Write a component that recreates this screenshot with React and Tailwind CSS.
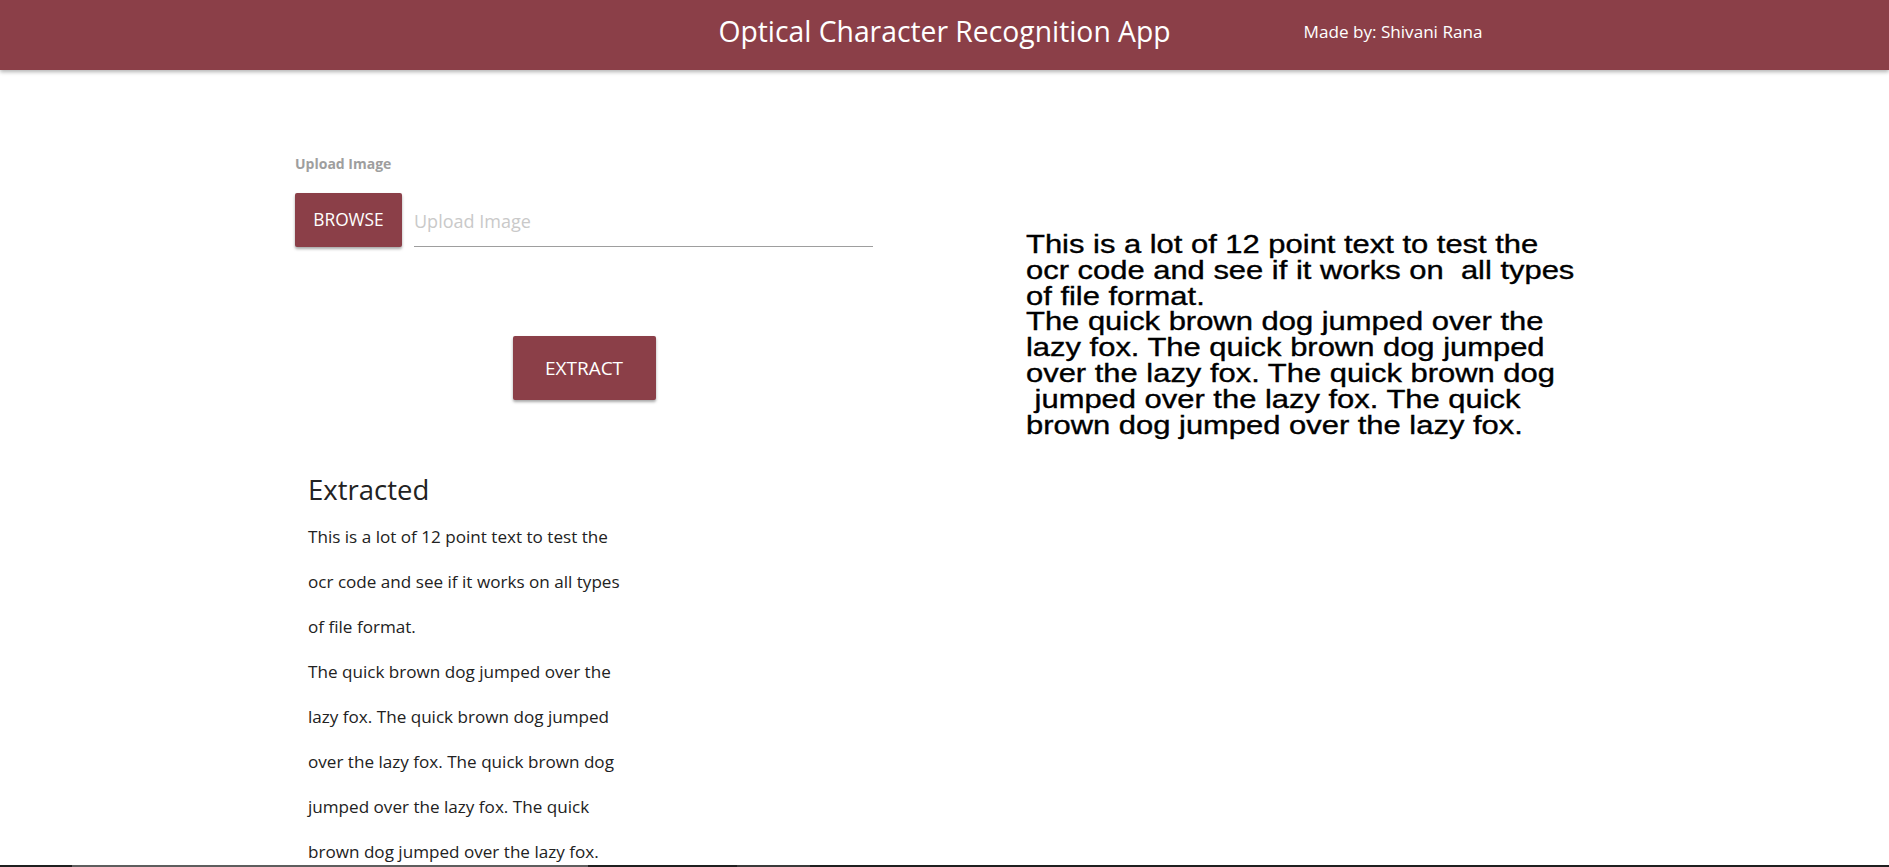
import React from 'react';

/* ─── content ─────────────────────────────────────────────── */
const extracted = [
  'This is a lot of 12 point text to test the',
  'ocr code and see if it works on all types',
  'of file format.',
  'The quick brown dog jumped over the',
  'lazy fox. The quick brown dog jumped',
  'over the lazy fox. The quick brown dog',
  'jumped over the lazy fox. The quick',
  'brown dog jumped over the lazy fox.',
];

const scanned = [
  'This is a lot of 12 point text to test the',
  'ocr code and see if it works on  all types',
  'of file format.',
  'The quick brown dog jumped over the',
  'lazy fox. The quick brown dog jumped',
  'over the lazy fox. The quick brown dog',
  ' jumped over the lazy fox. The quick',
  'brown dog jumped over the lazy fox.',
];

const sans = "font-['Open_Sans','Noto_Sans',sans-serif]";

/* ─── component ───────────────────────────────────────────── */
export default function App() {
  return (
    <div className={`h-screen flex flex-col overflow-hidden bg-white ${sans}`}>
      {/* navbar ------------------------------------------------------- */}
      <header className="h-[70px] shrink-0 bg-[#8b3f48] text-white shadow-[0_2px_4px_rgba(0,0,0,0.3)] z-10
                         grid grid-cols-[1fr_auto_1fr]">
        <div />
        <h1 className="text-[28.3px] leading-[38px] pt-[12px]">Optical Character Recognition App</h1>
        <div className="pl-[133px] pt-[20px] text-[17.1px] leading-[24px]">Made by: Shivani Rana</div>
      </header>

      {/* body --------------------------------------------------------- */}
      <main className="flex-1 overflow-hidden flex">
        {/* form + result */}
        <section className="ml-[295px] w-[578px] shrink-0">
          <label className="block mt-[84px] text-[14px] leading-[19px] font-bold text-[#9e9e9e]">
            Upload Image
          </label>

          <div className="mt-[20px] flex items-end">
            <button className="w-[107px] h-[54px] rounded-[2px] bg-[#8b3f48] text-white text-[17.3px] uppercase
                               shadow-[0_2px_3px_rgba(0,0,0,0.35)]">
              Browse
            </button>
            <input
              readOnly placeholder="Upload Image"
              className="ml-[12px] flex-1 h-[51px] border-b border-[#9e9e9e] text-[18px] outline-none
                         placeholder:text-[#c9c9c9]"
            />
          </div>

          <div className="mt-[89px] flex justify-center">
            <button className="w-[143px] h-[64px] rounded-[2px] bg-[#8b3f48] text-white text-[19px] uppercase
                               shadow-[0_2px_3px_rgba(0,0,0,0.35)]">
              Extract
            </button>
          </div>

          <div className="pl-[13px] mt-[71px] text-[#222]">
            <h2 className="text-[27.5px] leading-[38px] mb-[5px]">Extracted</h2>
            {extracted.map((l, i) => (
              <p key={i} className="text-[17.1px] leading-[45px] whitespace-nowrap">{l}</p>
            ))}
          </div>
        </section>

        {/* uploaded image */}
        <section className="ml-[153px] pt-[162px]">
          <div className="origin-left scale-x-[1.237] font-['Liberation_Sans',Arial,sans-serif] text-[25px]
                          leading-[25.8px] text-black whitespace-pre [-webkit-text-stroke:0.35px_black]">
            {scanned.map((l, i) => <div key={i}>{l}</div>)}
          </div>
        </section>
      </main>

      {/* bottom edge -------------------------------------------------- */}
      <div className="h-[2px] shrink-0 bg-[#1f1f1f] flex">
        <div className="w-[72px]" />
        <div className="w-[516px] bg-[#5e5e5e]" />
        <div className="w-[149px]" />
        <div className="w-[73px] bg-[#3a3a3a]" />
      </div>
    </div>
  );
}
